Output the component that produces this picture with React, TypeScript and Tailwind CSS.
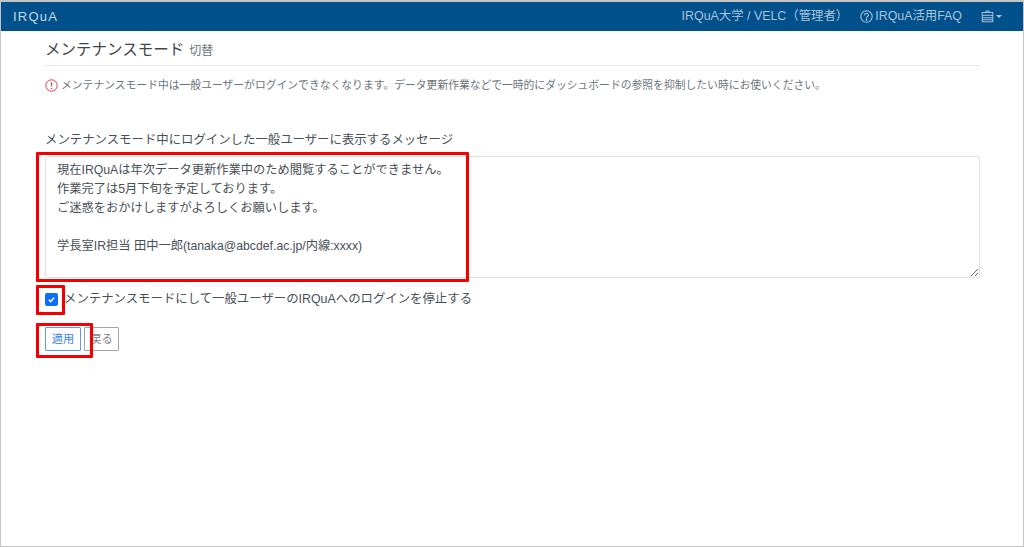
export default function App() {
  return (
    <div className="relative flex h-[547px] w-[1024px] flex-col overflow-hidden border border-t-2 border-[#c4c4c4] bg-white font-['Liberation_Sans','Noto_Sans_CJK_JP',sans-serif] text-[#495057]">
      <header className="flex h-[29px] shrink-0 items-center justify-between bg-[#00508c] pl-3 pr-[21px] text-[12.4px] text-[#a9c3da]">
        <span className="text-[13px] font-normal tracking-[1.2px] text-[#c9d9e8]">IRQuA</span>
        <nav className="flex items-center">
          <span>IRQuA大学 / VELC（管理者）</span>
          <span className="ml-[12px] flex items-center gap-[2px]">
            <svg viewBox="0 0 16 16" className="h-[13px] w-[13px]" fill="none" stroke="currentColor" strokeWidth="1.3">
              <circle cx="8" cy="8" r="7" />
              <path d="M5.6 6.2a2.4 2.2 0 1 1 3.6 1.9c-.8.5-1.2.9-1.2 1.8" strokeLinecap="round" />
              <circle cx="8" cy="12" r=".5" fill="currentColor" />
            </svg>
            IRQuA活用FAQ
          </span>
          <span className="ml-[19px] flex items-center gap-[2px]">
            <svg viewBox="0 0 16 16" className="h-[13px] w-[13px]" fill="none" stroke="currentColor" strokeWidth="1.2">
              <rect x="1.5" y="3" width="13" height="11.5" />
              <path d="M6 3V1.3h4V3M1.5 6.5h13M1.5 9.5h13M1.5 12h13" />
            </svg>
            <span className="h-0 w-0 border-x-[3px] border-t-[3px] border-x-transparent border-t-current" />
          </span>
        </nav>
      </header>

      <main className="flex flex-col pl-[44px] pr-[43px]">
        <div className="mt-[9px] flex h-[26px] items-baseline gap-[5px] border-b border-[#e4e6e8]">
          <h1 className="text-[15.5px] leading-[20px] text-[#3f464c]">メンテナンスモード</h1>
          <span className="text-[12px] text-[#6c757d]">切替</span>
        </div>
        <p className="mt-[11px] flex items-center gap-[3px] text-[10.8px] leading-[16px] text-[#6c757d]">
          <svg viewBox="0 0 16 16" className="h-[13px] w-[13px] shrink-0" fill="none" stroke="#dc3545" strokeWidth="1.2">
            <circle cx="8" cy="8" r="7" />
            <path d="M8 4v5M8 11v1.2" strokeWidth="1.5" />
          </svg>
          メンテナンスモード中は一般ユーザーがログインできなくなります。データ更新作業などで一時的にダッシュボードの参照を抑制したい時にお使いください。
        </p>
        <label className="mt-[38px] block text-[12.4px] leading-[18px]">メンテナンスモード中にログインした一般ユーザーに表示するメッセージ</label>
        <textarea
          readOnly
          className="mt-[7px] h-[122px] w-full rounded-[2px] border border-[#e0e3e6] px-[11px] py-[4px] text-[12.25px] leading-[19px] text-[#495057] outline-none"
          defaultValue={"現在IRQuAは年次データ更新作業中のため閲覧することができません。\n作業完了は5月下旬を予定しております。\nご迷惑をおかけしますがよろしくお願いします。\n\n学長室IR担当 田中一郎(tanaka@abcdef.ac.jp/内線:xxxx)"}
        />
        <div className="mt-[13px] flex items-center gap-[6px] text-[12.4px] leading-[16px]">
          <span className="flex h-[13px] w-[13px] items-center justify-center rounded-[2px] bg-[#0d6efd]">
            <svg viewBox="0 0 12 12" className="h-[9px] w-[9px]" fill="none" stroke="white" strokeWidth="2">
              <path d="M2.5 6.2 5 8.7 9.5 3.5" />
            </svg>
          </span>
          メンテナンスモードにして一般ユーザーのIRQuAへのログインを停止する
        </div>
        <div className="mt-[20px] flex items-center gap-[3px] text-[11.2px]">
          <button className="flex h-[24px] w-[36px] items-center justify-center rounded-[1px] border border-[#5a9bf0] text-[#3b82e6]">適用</button>
          <button className="flex h-[24px] w-[35px] items-center justify-center rounded-[1px] border border-[#a0a4a8] text-[#7d858c]">戻る</button>
        </div>
      </main>

      <div className="pointer-events-none absolute left-[35px] top-[150px] h-[130px] w-[433px] rounded-[1px] border-[3px] border-[#f50000]" />
      <div className="pointer-events-none absolute left-[35px] top-[283px] h-[30px] w-[29px] rounded-[1px] border-[3px] border-[#f50000]" />
      <div className="pointer-events-none absolute left-[35px] top-[321px] h-[35px] w-[57px] rounded-[1px] border-[3px] border-[#f50000]" />
    </div>
  );
}
